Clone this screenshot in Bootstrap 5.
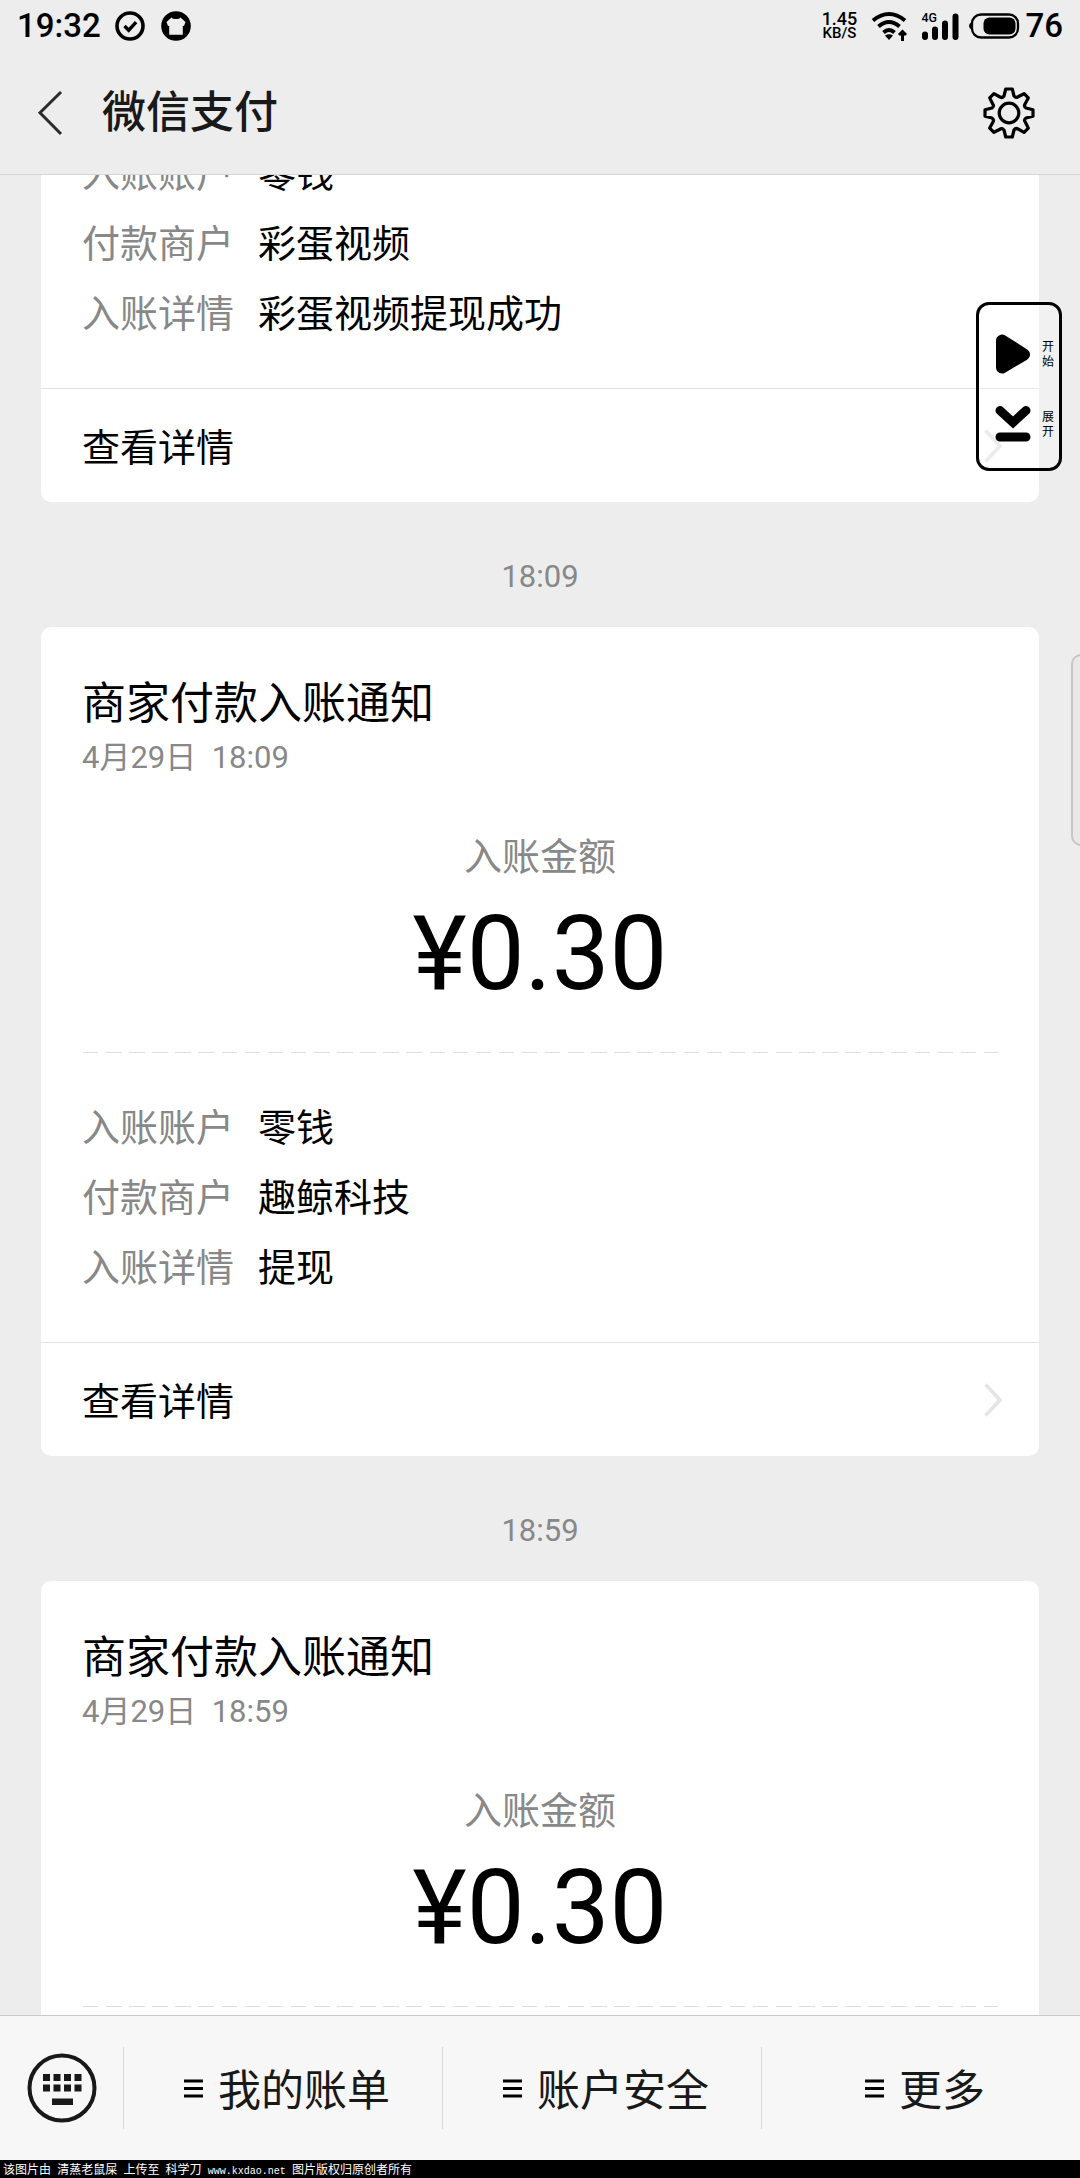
<!DOCTYPE html>
<html lang="zh-CN">
<head>
<meta charset="utf-8">
<meta name="viewport" content="width=device-width, initial-scale=1">
<title>微信支付</title>
<link href="https://cdn.jsdelivr.net/npm/bootstrap@5.3.0/dist/css/bootstrap.min.css" rel="stylesheet">
<style>
  body { height: 2178px; background: #ededed; color: #000; font-family: Roboto, "Noto Sans CJK SC", sans-serif; overflow: hidden; }
  svg { display: block; flex: none; }
  .status-bar { height: 52px; padding: 0 17px 0 17px; font-weight: 500; font-size: 33px; line-height: 52px; }
  .status-bar .ic-check { margin-left: 14px; }
  .status-bar .ic-shirt { margin-left: 16px; }
  .status-bar .ic-wifi { margin-left: 13px; }
  .status-bar .ic-signal { margin-left: 13px; }
  .status-bar .ic-battery { margin-left: 9px; margin-right: 5px; }
  .net-speed { width: 38px; font-size: 18px; line-height: 14px; }
  .net-speed small { font-size: 15px; display: block; line-height: 14px; }
  .title-bar { height: 123px; padding: 0 44px 0 36px; border-bottom: 1px solid #d6d6d6; }
  .title-bar h1 { margin: 0 0 0 38px; font-size: 44px; line-height: 60px; font-weight: 500; color: #191919; }
  .chat { padding: 0 41px; min-height: 0; }
  .notice { border: 0; border-radius: 10px; }
  .notice.scrolled { margin-top: -36px; }
  .notice .card-body { padding: 47px 41px 39px 41px; }
  .notice.scrolled .card-body { padding-top: 0; }
  .notice h2 { font-size: 44px; line-height: 60px; margin: 0 0 2px; font-weight: 400; }
  .stamp { font-size: 31px; line-height: 44px; color: #888; white-space: pre; }
  .sum-label { font-size: 38px; line-height: 60px; margin-top: 47px; color: #888; }
  .sum { font-size: 103px; line-height: 110px; margin-top: 12px; }
  .dashes { height: 1px; margin: 43px 0 40px 1px; background: repeating-linear-gradient(90deg, #dedede 0 15.5px, transparent 15.5px 23.1px); }
  .fact { height: 70px; font-size: 38px; line-height: 70px; }
  .fact dt { width: 176px; font-weight: 400; color: #888; }
  .fact dd { margin: 0; }
  .notice .card-footer { height: 114px; padding: 0 37px 0 41px; background: none; border-top: 1px solid #e2e2e2; font-size: 38px; }
  .card-footer span { padding-top: 5px; }
  .divider-time { height: 125px; padding-top: 26px; font-size: 31px; color: #888; }
  .menu-bar { height: 145px; background: #f7f7f7; border-top: 1px solid #c9c9c9; color: #191919; }
  .kbd-cell { flex: 0 0 123px; }
  .menu-cell { flex: 1 1 0; height: 82px; font-size: 43px; border-left: 1px solid #d9d9d9; gap: 15px; padding-left: 8px; }
  .menu-cell span { padding-top: 6px; }
  .credit { height: 18px; background: #000; color: #fff; font: 12px/18px "Noto Sans CJK SC", sans-serif; padding-left: 3px; word-spacing: 3.5px; }
  .credit span { font: 10px/18px "Liberation Mono", monospace; }
  .recorder { position: absolute; left: 976px; top: 302px; width: 86px; height: 169px; border: 3px solid #000; border-radius: 13px; background: rgba(255,255,255,.25); padding: 29px 5px 0 16px; }
  .recorder .act { height: 70px; }
  .recorder .act span { width: 12px; padding-top: 6px; font-size: 12px; line-height: 14.5px; }
  .edge-tab { position: absolute; left: 1071px; top: 654px; width: 20px; height: 192px; border: 2px solid #c6c6c6; border-radius: 11px; background: #e8e8e8; }
</style>
</head>
<body class="d-flex flex-column position-relative">
<header class="flex-shrink-0">
  <div class="status-bar d-flex align-items-center">
    <span>19:32</span>
    <svg class="ic-check" width="30" height="30" viewBox="0 0 30 30" fill="none" stroke="#000"><circle cx="15" cy="15" r="13" stroke-width="3.6"/><path d="M9.5 15l4.2 4.2 7.4-8" stroke-width="3.4"/></svg>
    <svg class="ic-shirt" width="30" height="30" viewBox="0 0 30 30"><circle cx="15" cy="15" r="14.8"/><path d="M10.500 6.500c1.500 2 7.500 2 9 0l5 4.500-1.500 4-1.200-.3v9H8.200v-9l-1.200.3-1.500-4z" fill="#ededed"/></svg>
    <div class="net-speed ms-auto text-center">1.45<small>KB/S</small></div>
    <svg class="ic-wifi" width="37" height="32" viewBox="0 0 37 32" fill="none" stroke="#000" stroke-width="4"><path d="M2 10.500q16-13 32 0M7.500 16.500q10.500-9 21 0M12.500 22.500q5.500-5 11 0"/><path d="M18 30l-4-4.500q4-2.500 8 0z" fill="#000" stroke="none"/><path d="M31.500 31v-9M28 25l3.500-3.500L35 25" stroke-width="3"/></svg>
    <svg class="ic-signal" width="38" height="32" viewBox="0 0 38 32"><g stroke="#000" stroke-width="6" stroke-linecap="round"><path d="M4 24.500v2.500M14 19.500v7.500M24 13.500v13.500M34.500 6.500v20.500"/></g><text x="0.500" y="12" font-family="Roboto" font-size="13" font-weight="500" textLength="15.500" lengthAdjust="spacingAndGlyphs">4G</text></svg>
    <svg class="ic-battery" width="52" height="26" viewBox="0 0 52 26"><rect x="4" y="1.500" width="46" height="23" rx="9" fill="none" stroke="#000" stroke-width="2.300"/><path d="M4 8.500Q-2 13 4 17.500z"/><rect x="15.500" y="4.500" width="32" height="17" rx="6"/></svg>
    <span>76</span>
  </div>
  <div class="title-bar d-flex align-items-center">
    <svg width="28" height="46" viewBox="0 0 28 46" fill="none" stroke="#2b2b2b" stroke-width="3"><path d="M25 2L4 22.700 25 44"/></svg>
    <h1>微信支付</h1>
    <svg class="ms-auto" width="54" height="54" viewBox="-27 -27 54 54" fill="none" stroke="#000" stroke-width="3.200" stroke-linejoin="round"><circle r="9.800"/><path d="M-3.300-24H3.300L5-17Q7-14.500 9-16.300L15.100-19.300 19.300-15.100 16-9Q14.700-6.700 17-5L24-3.300V3.300L17 5Q14.500 7 16.300 9L19.300 15.100 15.100 19.300 9 16Q6.700 14.700 5 17L3.300 24H-3.300L-5 17Q-7 14.500-9 16.300L-15.100 19.300-19.300 15.100-16 9Q-14.700 6.700-17 5L-24 3.300V-3.300L-17-5Q-14.500-7-16.300-9L-19.300-15.100-15.100-19.300-9-16Q-6.700-14.700-5-17Z"/></svg>
  </div>
</header>

<main class="chat flex-fill overflow-hidden">
  <article class="card notice scrolled">
    <dl class="card-body mb-0">
      <div class="fact d-flex"><dt>入账账户</dt><dd>零钱</dd></div>
      <div class="fact d-flex"><dt>付款商户</dt><dd>彩蛋视频</dd></div>
      <div class="fact d-flex"><dt>入账详情</dt><dd>彩蛋视频提现成功</dd></div>
    </dl>
    <div class="card-footer d-flex align-items-center justify-content-between"><span>查看详情</span>
      <svg width="18" height="34" viewBox="0 0 18 34" fill="none" stroke="#e4e4e4" stroke-width="3.500"><path d="M1.500 1.500L16 17 1.500 32.500"/></svg></div>
  </article>

  <div class="divider-time d-flex align-items-center justify-content-center">18:09</div>

  <article class="card notice">
    <div class="card-body">
      <h2>商家付款入账通知</h2>
      <div class="stamp">4月29日  18:09</div>
      <div class="sum-label text-center">入账金额</div>
      <div class="sum text-center">¥0.30</div>
      <div class="dashes"></div>
      <dl class="mb-0">
        <div class="fact d-flex"><dt>入账账户</dt><dd>零钱</dd></div>
        <div class="fact d-flex"><dt>付款商户</dt><dd>趣鲸科技</dd></div>
        <div class="fact d-flex"><dt>入账详情</dt><dd>提现</dd></div>
      </dl>
    </div>
    <div class="card-footer d-flex align-items-center justify-content-between"><span>查看详情</span>
      <svg width="18" height="34" viewBox="0 0 18 34" fill="none" stroke="#e4e4e4" stroke-width="3.500"><path d="M1.500 1.500L16 17 1.500 32.500"/></svg></div>
  </article>

  <div class="divider-time d-flex align-items-center justify-content-center">18:59</div>

  <article class="card notice">
    <div class="card-body">
      <h2>商家付款入账通知</h2>
      <div class="stamp">4月29日  18:59</div>
      <div class="sum-label text-center">入账金额</div>
      <div class="sum text-center">¥0.30</div>
      <div class="dashes"></div>
    </div>
  </article>
</main>

<nav class="menu-bar d-flex align-items-center flex-shrink-0">
  <div class="kbd-cell d-flex justify-content-center">
    <svg width="70" height="70" viewBox="0 0 70 70" fill="#191919"><circle cx="35" cy="35" r="32.500" fill="none" stroke="#191919" stroke-width="4"/><path d="M16 21h7v7h-7zM26.500 21h7v7h-7zM37 21h7v7h-7zM47.500 21h7v7h-7zM16 31.500h7v7h-7zM26.500 31.500h7v7h-7zM37 31.500h7v7h-7zM47.500 31.500h7v7h-7zM25 45.500h21v6.500H25z"/></svg>
  </div>
  <div class="menu-cell d-flex align-items-center justify-content-center"><svg width="19" height="19" viewBox="0 0 19 19" fill="#000"><path d="M0 .5h19v3H0zM0 8h19v3H0zM0 15.500h19v3H0z"/></svg><span>我的账单</span></div>
  <div class="menu-cell d-flex align-items-center justify-content-center"><svg width="19" height="19" viewBox="0 0 19 19" fill="#000"><path d="M0 .5h19v3H0zM0 8h19v3H0zM0 15.500h19v3H0z"/></svg><span>账户安全</span></div>
  <div class="menu-cell d-flex align-items-center justify-content-center"><svg width="19" height="19" viewBox="0 0 19 19" fill="#000"><path d="M0 .5h19v3H0zM0 8h19v3H0zM0 15.500h19v3H0z"/></svg><span>更多</span></div>
</nav>
<footer class="credit flex-shrink-0">该图片由 清蒸老鼠屎 上传至 科学刀 <span>www.kxdao.net</span> 图片版权归原创者所有</footer>

<aside class="recorder">
  <div class="act d-flex justify-content-between"><svg width="36" height="40" viewBox="0 0 36 40"><path d="M7 6.500v27L29 20.500z" stroke="#000" stroke-width="12" stroke-linejoin="round"/></svg><span>开始</span></div>
  <div class="act d-flex justify-content-between"><svg width="36" height="40" viewBox="0 0 36 40" fill="none" stroke="#000" stroke-width="9" stroke-linecap="round"><path d="M5 6.500L18 18.500 31 6.500M5 33h26"/></svg><span>展开</span></div>
</aside>
<div class="edge-tab"></div>
<script src="https://cdn.jsdelivr.net/npm/bootstrap@5.3.0/dist/js/bootstrap.bundle.min.js"></script>
</body>
</html>
